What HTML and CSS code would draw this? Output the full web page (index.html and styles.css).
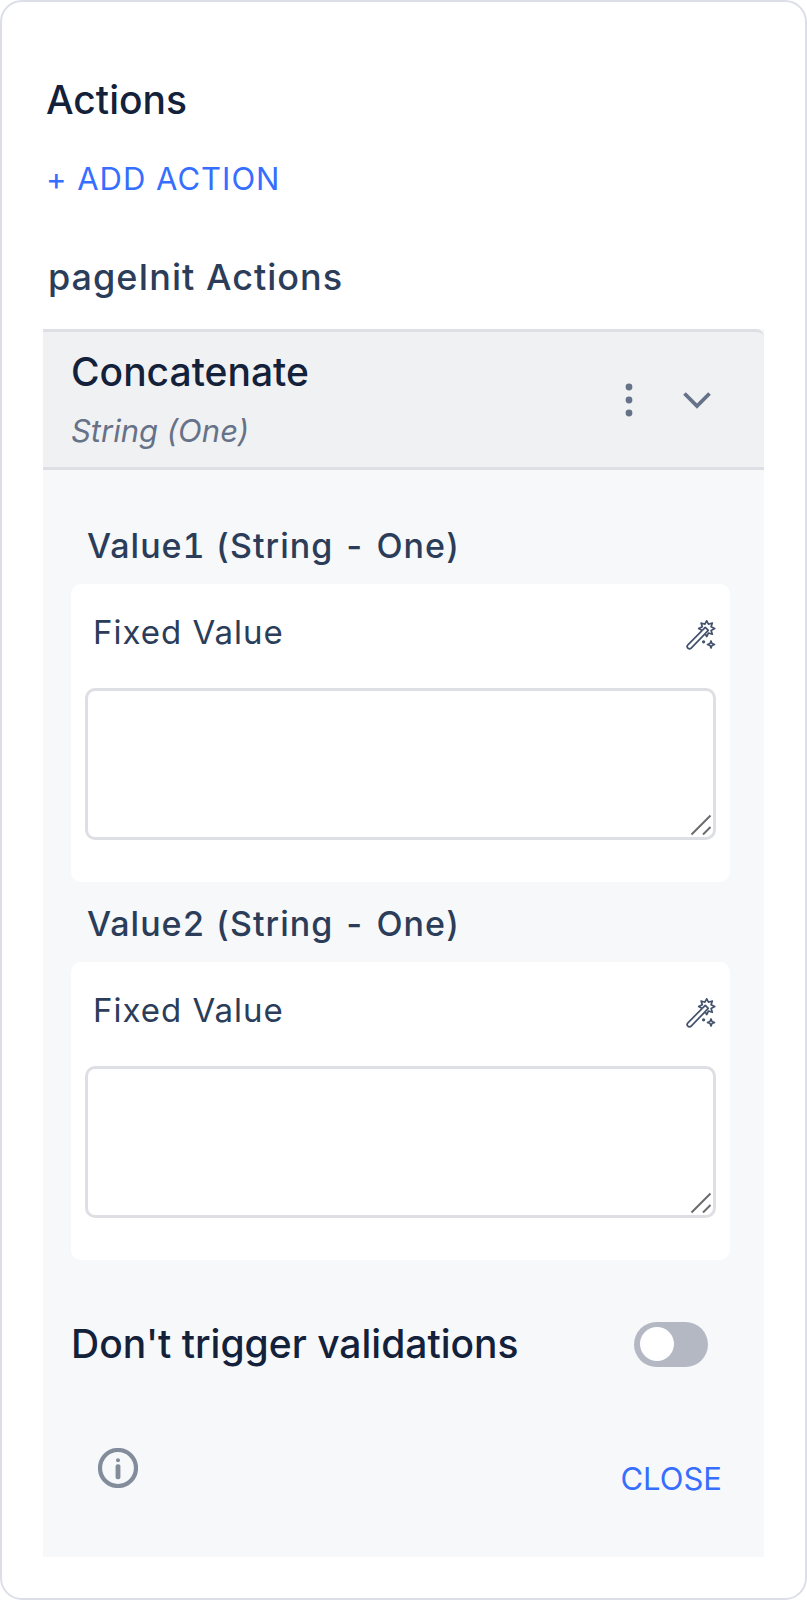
FILE: index.html
```html
<!DOCTYPE html>
<html lang="en">

<head>
  <meta charset="UTF-8">
  <meta name="viewport" content="width=device-width, initial-scale=1.0">
  <title>Actions</title>
  <link rel="stylesheet" href="styles.css">
</head>

<body>
  <svg class="sprite" aria-hidden="true">
    <symbol id="wand" viewBox="0 0 30 30">
      <path d="M16.3 10.400 L1.900 24.800 a2.300 2.300 0 0 0 3.300 3.300 L19.200 13.600" />
      <path d="M16.3 10.400 l3-3 3 3 -3 3" />
      <path d="M19 13.400 L20.700 16.600 22.500 13 26.300 14.200 25.100 10.400 28.700 8.600 25.100 6.800 26.300 3 22.500 4.200 20.700 .800 18.900 4.200 15.100 3 16.300 6.800 12.700 8.600 16.300 10.400" />
      <path d="M25 21 l1 2.500 2.500 1 -2.500 1 -1 2.500 -1-2.500 -2.500-1 2.500-1z" />
      <circle cx="17.600" cy="21.800" r=".8" />
    </symbol>
    <symbol id="grip" viewBox="0 0 22 22">
      <path d="M1.500 20.500 L20.500 1.500 M13 20.500 L20.500 13" />
    </symbol>
  </svg>

  <main class="panel">
    <h1>Actions</h1>
    <button type="button" class="link add">+ ADD ACTION</button>
    <h2>pageInit Actions</h2>

    <section class="action">
      <header class="action-header">
        <div class="action-title">
          <h3>Concatenate</h3>
          <p>String (One)</p>
        </div>
        <div class="action-tools">
          <button type="button" class="icon" aria-label="More options">
            <svg width="8" height="34" viewBox="0 0 8 34" fill="currentColor">
              <circle cx="4" cy="4" r="3.4" />
              <circle cx="4" cy="17" r="3.4" />
              <circle cx="4" cy="30" r="3.4" />
            </svg>
          </button>
          <button type="button" class="icon" aria-label="Collapse">
            <svg width="28" height="18" viewBox="0 0 28 18" fill="none" stroke="currentColor" stroke-width="3.8">
              <path d="M1.500 2.500 L14 15 L26.500 2.500" />
            </svg>
          </button>
        </div>
      </header>

      <div class="action-body">
        <div class="field">
          <h4>Value1 (String - One)</h4>
          <div class="card">
            <div class="card-head">
              <label for="value1">Fixed Value</label>
              <button type="button" class="icon wand" aria-label="Edit expression"><svg width="30" height="30"><use href="#wand" /></svg></button>
            </div>
            <div class="input">
              <textarea id="value1"></textarea>
              <svg class="grip" width="22" height="22"><use href="#grip" /></svg>
            </div>
          </div>
        </div>

        <div class="field">
          <h4>Value2 (String - One)</h4>
          <div class="card">
            <div class="card-head">
              <label for="value2">Fixed Value</label>
              <button type="button" class="icon wand" aria-label="Edit expression"><svg width="30" height="30"><use href="#wand" /></svg></button>
            </div>
            <div class="input">
              <textarea id="value2"></textarea>
              <svg class="grip" width="22" height="22"><use href="#grip" /></svg>
            </div>
          </div>
        </div>

        <div class="toggle">
          <label for="skip-validations">Don't trigger validations</label>
          <input type="checkbox" role="switch" id="skip-validations">
        </div>

        <footer>
          <button type="button" class="icon info" aria-label="Info">
            <svg width="40" height="40" viewBox="0 0 40 40">
              <circle cx="20" cy="20" r="18" fill="none" stroke="currentColor" stroke-width="4.2" />
              <circle cx="20" cy="12.3" r="2" fill="currentColor" />
              <rect x="17.600" y="16.300" width="4.800" height="15" rx="2" fill="currentColor" />
            </svg>
          </button>
          <button type="button" class="link close">CLOSE</button>
        </footer>
      </div>
    </section>
  </main>
</body>

</html>
```

FILE: styles.css
```css
*,
*:after,
*:before {
  box-sizing: border-box;
}

* {
  margin: 0;
  padding: 0;
}

:root {
  --ink: #14213a;
  --ink-soft: #2b3d59;
  --muted: #667288;
  --line: #dedfe4;
  --blue: #366eff;
}

body {
  font-family: Inter, sans-serif;
  color: var(--ink);
  background: white;
}

button {
  border: 0;
  background: none;
  font: inherit;
  cursor: pointer;
}

svg {
  display: block;
}

h1,
h3,
.toggle label {
  font-size: 39px;
  line-height: 48px;
  font-weight: 500;
}

h2,
h4 {
  font-size: 36px;
  line-height: 44px;
  font-weight: 500;
  letter-spacing: 1px;
  color: var(--ink-soft);
}

h4 {
  font-size: 34px;
  font-variant-numeric: tabular-nums;
}

.sprite {
  position: absolute;
  width: 0;
  height: 0;
}

.panel {
  min-height: 100vh;
  padding: 74px 41px 41px;
  border: 2px solid #dcdfe7;
  border-radius: 22px;
}

.panel > h1,
.panel > .add {
  margin-left: 3px;
}

.panel > h2 {
  margin: 56px 0 30px 5px;
}

.link {
  font-size: 31px;
  line-height: 40px;
  color: var(--blue);
}

.add {
  display: block;
  margin-top: 35px;
  letter-spacing: 1px;
}

.icon {
  color: var(--muted);
}

/* Action accordion */
.action {
  background: #f6f8fa;
}

.action-header {
  display: flex;
  align-items: center;
  justify-content: space-between;
  padding: 16px 53px 16px 28px;
  background: #f0f1f3;
  border-top: 3px solid var(--line);
  border-bottom: 3px solid var(--line);
  border-top-right-radius: 8px;
}

.action-title p {
  margin-top: 15px;
  font-size: 31px;
  line-height: 40px;
  font-style: italic;
  color: var(--muted);
}

.action-tools {
  display: flex;
  align-items: center;
  gap: 50px;
}

.action-body {
  padding: 54px 34px 58px 28px;
}

/* Fields */
.field + .field {
  margin-top: 20px;
}

.field h4 {
  margin: 0 0 16px 16px;
}

.card {
  padding: 26px 14px 42px;
  background: white;
  border-radius: 10px;
}

.card-head {
  display: flex;
  align-items: center;
  justify-content: space-between;
  margin-bottom: 34px;
  padding-left: 8px;
}

.card-head label {
  font-size: 33px;
  line-height: 44px;
  letter-spacing: 1px;
  color: var(--ink-soft);
}

.wand {
  margin-top: 6px;
  color: #43526b;
}

#wand {
  fill: none;
  stroke: currentColor;
  stroke-width: 1.7;
  stroke-linejoin: round;
}

.input {
  position: relative;
}

textarea {
  display: block;
  width: 100%;
  height: 152px;
  padding: 12px;
  border: 3px solid var(--line);
  border-radius: 10px;
  font: inherit;
  font-size: 31px;
  resize: none;
}

.grip {
  position: absolute;
  right: 4px;
  bottom: 4px;
  fill: none;
  stroke: #6b6b6b;
  stroke-width: 2;
  pointer-events: none;
}

/* Switch */
.toggle {
  display: flex;
  align-items: center;
  justify-content: space-between;
  margin-top: 60px;
  padding-right: 22px;
}

.toggle input {
  appearance: none;
  display: flex;
  width: 74px;
  height: 45px;
  padding: 5px 6px;
  border-radius: 23px;
  background: #b3b8c2;
  cursor: pointer;
}

.toggle input::before {
  content: "";
  width: 34px;
  height: 34px;
  border-radius: 50%;
  background: white;
}

.toggle input:checked {
  justify-content: flex-end;
  background: var(--blue);
}

footer {
  display: flex;
  align-items: flex-start;
  justify-content: space-between;
  margin-top: 80px;
  padding: 0 8px 0 27px;
}

.info {
  color: #828c9a;
}

.close {
  margin-top: 11px;
}
```
